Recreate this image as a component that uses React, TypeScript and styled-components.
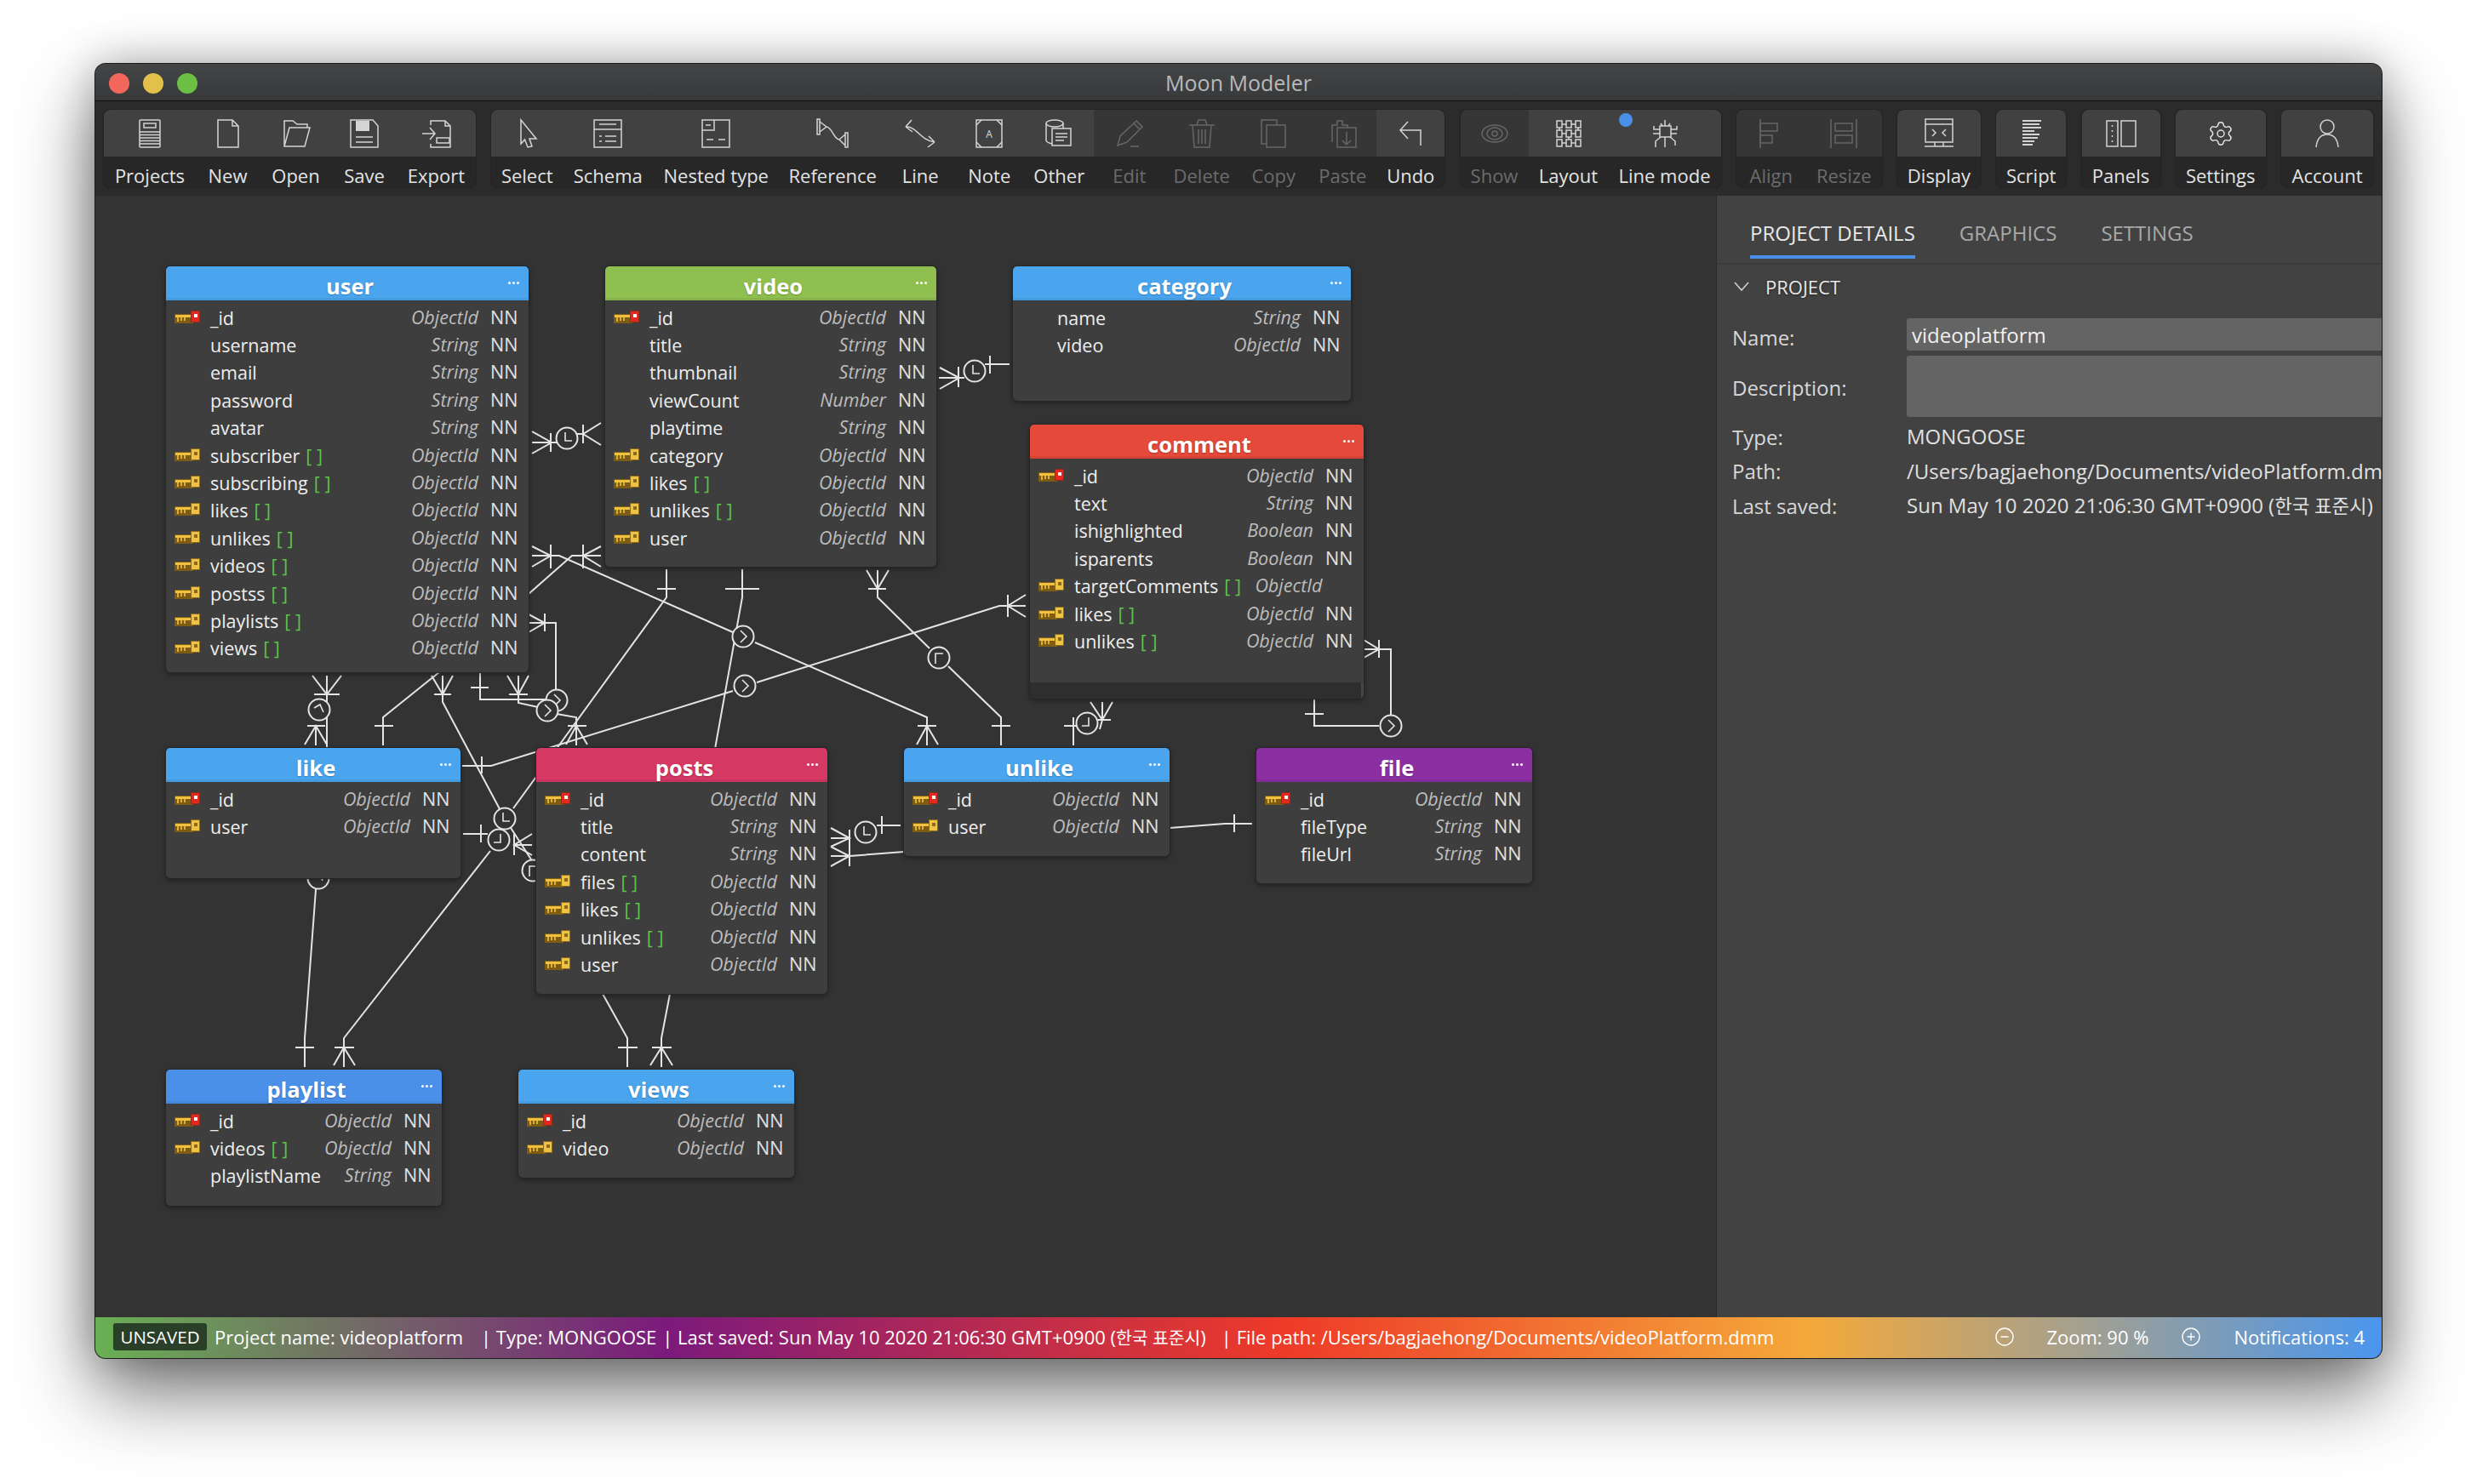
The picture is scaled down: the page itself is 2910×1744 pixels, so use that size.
import { ReactNode } from "react";
import styled, { createGlobalStyle } from "styled-components";
import { CircleMinus, CirclePlus, Settings } from "lucide-react";

// page position of the canvas, the diagram coordinates below are page pixels
const CANVAS_X = 112;
const CANVAS_Y = 230;

const GlobalStyle = createGlobalStyle`
  html, body {
    margin: 0;
    background: #fff;
    font-family: "Open Sans", "Noto Sans CJK KR", sans-serif;
  }
`;

const Page = styled.div`
  width: 2910px;
  height: 1744px;
  box-sizing: border-box;
  padding: 75px 112px 148px;
  overflow: hidden;
`;

const Window = styled.div`
  height: 100%;
  display: flex;
  flex-direction: column;
  border-radius: 12px;
  overflow: hidden;
  background: #333;
  box-shadow: 0 0 0 1px #1c1c1c, 0 40px 90px rgba(0, 0, 0, 0.55), 0 0 50px rgba(0, 0, 0, 0.25);
`;

const TitleBar = styled.div`
  flex: none;
  height: 44px;
  padding-top: 1px;
  box-sizing: border-box;
  position: relative;
  display: flex;
  align-items: center;
  justify-content: center;
  background: linear-gradient(#444547, #38393b);
  border-bottom: 1px solid #101010;
  color: #b9b9b9;
  font-size: 25px;
`;

const Lights = styled.div`
  position: absolute;
  left: 16px;
  top: 11px;
  display: flex;
  gap: 16px;
`;

const Light = styled.span<{ $color: string }>`
  width: 24px;
  height: 24px;
  border-radius: 50%;
  background: ${(p) => p.$color};
`;

const Toolbar = styled.div`
  flex: none;
  height: 111px;
  box-sizing: border-box;
  padding: 10px 10px 10px;
  display: flex;
  justify-content: space-between;
  background: #2b2b2b;
`;

const ToolGroup = styled.div`
  display: flex;
  border-radius: 8px;
  overflow: hidden;
  background: #272727;
  box-shadow: 0 0 2px rgba(0, 0, 0, 0.6);
`;

const ToolItem = styled.div<{ $off?: boolean; $w: number }>`
  position: relative;
  width: ${(p) => p.$w}px;
  display: flex;
  flex-direction: column;
  color: ${(p) => (p.$off ? "#6c6c6c" : "#e4e4e4")};
`;

const IconCell = styled.div<{ $off?: boolean }>`
  height: 55px;
  display: flex;
  align-items: center;
  justify-content: center;
  background: ${(p) => (p.$off ? "#363636" : "#414141")};
`;

const LabelCell = styled.div`
  height: 36px;
  box-sizing: border-box;
  padding-top: 8px;
  display: flex;
  align-items: center;
  justify-content: center;
  font-size: 22px;
  white-space: nowrap;
`;

const ToolSvg = styled.svg`
  width: 40px;
  height: 36px;
  fill: none;
  stroke: currentColor;
  stroke-width: 1.5;
  opacity: 0.9;
`;

const ModeDot = styled.span`
  position: absolute;
  left: 12px;
  top: 4px;
  width: 16px;
  height: 16px;
  border-radius: 50%;
  background: #4a90e8;
`;

const Main = styled.div`
  flex: 1;
  min-height: 0;
  display: flex;
`;

const Canvas = styled.div`
  flex: 1;
  position: relative;
  overflow: hidden;
  background: #333;
  box-shadow: inset -1px 0 0 #2b2b2b;
`;

const Wires = styled.svg`
  position: absolute;
  left: 0;
  top: 0;
  width: 100%;
  height: 100%;
  fill: none;
  stroke: #e4e4e4;
  stroke-width: 2;
`;

const Node = styled.div<{ $x: number; $y: number; $w: number; $h: number }>`
  position: absolute;
  left: ${(p) => p.$x - CANVAS_X}px;
  top: ${(p) => p.$y - CANVAS_Y}px;
  width: ${(p) => p.$w}px;
  height: ${(p) => p.$h}px;
  display: flex;
  flex-direction: column;
  border-radius: 5px;
  overflow: hidden;
  background: #3e3e3e;
  box-shadow: 0 0 0 1px #262626, 0 2px 6px rgba(0, 0, 0, 0.45);
`;

const NodeHead = styled.div<{ $color: string }>`
  flex: none;
  height: 40px;
  box-sizing: border-box;
  position: relative;
  display: flex;
  align-items: center;
  justify-content: center;
  padding: 5px 0 0 6px;
  background: ${(p) => p.$color};
  box-shadow: inset 0 -3px 0 rgba(0, 0, 0, 0.06);
  color: #fff;
  font-size: 25.5px;
  font-weight: 700;
  text-shadow: 0 1px 2px rgba(0, 0, 0, 0.25);
`;

const NodeMenu = styled.span`
  position: absolute;
  right: 11px;
  top: 18px;
  display: flex;
  gap: 2px;
  i {
    width: 3px;
    height: 3px;
    border-radius: 50%;
    background: #fff;
  }
`;

const NodeRows = styled.div`
  flex: 1;
  padding-top: 3px;
`;

const Row = styled.div`
  height: 32.4px;
  display: flex;
  align-items: center;
  padding: 0 12.5px 0 10px;
  font-size: 21.5px;
  color: #eee;
`;

const KeySlot = styled.span`
  flex: none;
  display: block;
  width: 30px;
  height: 15px;
  margin-right: 12px;
  svg {
    display: block;
  }
`;

const FieldName = styled.span`
  flex: 1;
  white-space: nowrap;
  padding-top: 2px;
`;

const ListMark = styled.span`
  margin-left: 7px;
  color: #5cc24a;
`;

const FieldType = styled.span<{ $bare?: boolean }>`
  flex: none;
  font-style: italic;
  color: #bdbdbd;
  margin-right: ${(p) => (p.$bare ? "36px" : "0")};
`;

const FieldNN = styled.span`
  flex: none;
  width: 46.5px;
  text-align: right;
  color: #e2e2e2;
`;

const ScrollStrip = styled.div`
  flex: none;
  height: 19px;
  background: #2e2e2e;
  border-right: 3px solid #464646;
`;

const Panel = styled.div`
  flex: none;
  width: 781px;
  background: #424242;
  color: #dcdcdc;
  font-size: 24px;
  overflow: hidden;
`;

const Tabs = styled.div`
  height: 81px;
  box-sizing: border-box;
  padding-left: 39px;
  display: flex;
  gap: 52px;
  border-bottom: 2px solid #3a3a3a;
`;

const Tab = styled.div<{ $active?: boolean }>`
  height: 74px;
  box-sizing: border-box;
  padding-top: 27px;
  color: ${(p) => (p.$active ? "#e8e8e8" : "#a9a9a9")};
  border-bottom: 4px solid ${(p) => (p.$active ? "#4a90e8" : "transparent")};
`;

const SectionHead = styled.div`
  height: 52px;
  padding-left: 20px;
  display: flex;
  align-items: center;
  gap: 19px;
  font-size: 22px;
  color: #e8e8e8;
  text-shadow: 0 1px 3px rgba(0, 0, 0, 0.5);
`;

const Chevron = styled.svg`
  width: 18px;
  height: 12px;
  fill: none;
  stroke: #cfcfcf;
  stroke-width: 1.6;
`;

const Fields = styled.div`
  padding: 11px 0 0 18px;
  display: grid;
  grid-template-columns: 205px 1fr;
  align-items: center;
  white-space: nowrap;
`;

const FieldLabel = styled.div`
  color: #d8d8d8;
`;

const TextBox = styled.div<{ $h: number; $gap: number }>`
  height: ${(p) => p.$h}px;
  margin-bottom: ${(p) => p.$gap}px;
  padding-left: 6px;
  display: flex;
  align-items: center;
  border-radius: 3px 0 0 3px;
  background: #646464;
  color: #f0f0f0;
`;

const FieldValue = styled.div`
  height: 40.5px;
  line-height: 40.5px;
  color: #e0e0e0;
`;

const Hangul = styled.span`
  font-size: 0.93em;
`;

const StatusBar = styled.div`
  flex: none;
  height: 48px;
  box-sizing: border-box;
  padding: 0 20px 2px 21px;
  display: flex;
  align-items: center;
  background: linear-gradient(90deg, #69b053, #7c1a7c 25%, #ee3a28 52%, #f4a93a 75%, #4a96ee);
  color: #fff;
  font-size: 22px;
  white-space: nowrap;
`;

const SavedBadge = styled.span`
  height: 32px;
  width: 110px;
  display: flex;
  align-items: center;
  justify-content: center;
  border-radius: 3px;
  background: #2a3f27;
  font-size: 20.5px;
  margin-right: 9px;
`;

const StatusText = styled.span<{ $gap: number }>`
  margin-right: ${(p) => p.$gap}px;
`;

const StatusSpring = styled.span`
  flex: 1;
`;

const ZoomButton = styled.span`
  display: flex;
  color: #fff;
`;

const ZoomText = styled.span`
  margin: 0 38px 0 37px;
`;

const Notices = styled.span`
  margin-left: 38px;
`;

type Field = { name: string; type: string; pk?: boolean; fk?: boolean; list?: boolean; bare?: boolean };
type Table = { title: string; color: string; x: number; y: number; w: number; h: number; fields: Field[]; strip?: boolean };

const BLUE = "#4aa5ee";
const pk: Field = { name: "_id", type: "ObjectId", pk: true };
const ref = (name: string): Field => ({ name, type: "ObjectId", fk: true, list: true });
const one = (name: string): Field => ({ name, type: "ObjectId", fk: true });
const str = (name: string): Field => ({ name, type: "String" });

const tables: Table[] = [
  {
    title: "user", color: BLUE, x: 195, y: 313, w: 426, h: 477,
    fields: [pk, str("username"), str("email"), str("password"), str("avatar"), ref("subscriber"), ref("subscribing"), ref("likes"), ref("unlikes"), ref("videos"), ref("postss"), ref("playlists"), ref("views")],
  },
  {
    title: "video", color: "#8fbf4f", x: 711, y: 313, w: 389, h: 353,
    fields: [pk, str("title"), str("thumbnail"), { name: "viewCount", type: "Number" }, str("playtime"), one("category"), ref("likes"), ref("unlikes"), one("user")],
  },
  {
    title: "category", color: BLUE, x: 1190, y: 313, w: 397, h: 158,
    fields: [str("name"), { name: "video", type: "ObjectId" }],
  },
  {
    title: "comment", color: "#e4493a", x: 1210, y: 499, w: 392, h: 322, strip: true,
    fields: [
      pk, str("text"), { name: "ishighlighted", type: "Boolean" }, { name: "isparents", type: "Boolean" },
      { name: "targetComments", type: "ObjectId", fk: true, list: true, bare: true }, ref("likes"), ref("unlikes"),
    ],
  },
  { title: "like", color: BLUE, x: 195, y: 879, w: 346, h: 153, fields: [pk, one("user")] },
  {
    title: "posts", color: "#d63864", x: 630, y: 879, w: 342, h: 289,
    fields: [pk, str("title"), str("content"), ref("files"), ref("likes"), ref("unlikes"), one("user")],
  },
  { title: "unlike", color: BLUE, x: 1062, y: 879, w: 312, h: 127, fields: [pk, one("user")] },
  { title: "file", color: "#8c2fa3", x: 1476, y: 879, w: 324, h: 159, fields: [pk, str("fileType"), str("fileUrl")] },
  { title: "playlist", color: "#4a90e8", x: 195, y: 1257, w: 324, h: 160, fields: [pk, ref("videos"), str("playlistName")] },
  { title: "views", color: BLUE, x: 609, y: 1257, w: 324, h: 127, fields: [pk, one("video")] },
];

// relation lines, a bar is the "one" mark and the three-way ends the "many" mark
const wires = [
  // user <> like
  "M367 794L384 816L401 794M369 816H399M384 794V816L384 879",
  "M361 853H382M371 853V876M358 875L371 853L384 875",
  "M516 790L450 843V876M440 853H462",
  // user <> unlike / posts
  "M507 794L520 816L532 794M510 816H530M520 794V825L593 962L624 1010",
  "M553 808H574M564 790V822H641",
  "M653 811V732H621M621 722L640 732L621 743M640 721V742",
  "M596 794L609 816L621 794M598 816H620M609 794V826L632 831M654 839L677 843V876M667 853H689M665 875L677 853L690 875",
  // video <> posts
  "M783 669V702L603 950M772 692H794",
  "M872 669V702L840 880M852 692H892",
  // like <> comment
  "M543 900H577L861 812M889 802L1174 712H1205M1205 699L1184 712L1205 725M1184 699V725M566 889V909",
  // user <> unlike
  "M625 642L647 653L625 666M647 640V668M625 653H657L861 743M887 755L1089 843V876M1078 853H1100M1077 875L1089 853L1102 875",
  "M706 642L685 653L706 666M685 640V668M706 653H672L621 698",
  // user <> video
  "M625 507L648 520L625 533M647 509V531M625 520H654M685 499V521M706 497L685 510L706 523M685 510H678",
  // video <> category
  "M1104 432L1127 444L1104 457M1126 431V455M1103 444H1133M1163 418V439M1157 428H1186",
  // like / posts
  "M604 980V1005M625 980L604 993L625 1005M604 993H625",
  "M565 969V990M544 980H573",
  // posts <> unlike
  "M976 973L998 985L976 995M998 975V1000M976 985H998M976 995L998 1006L976 1018M998 995V1018M976 1006H998L1062 1001",
  "M1036 959V980M1030 970H1058",
  // unlike <> file
  "M1374 973L1439 968H1471M1450 957V978",
  // comment <> unlike
  "M1281 825L1295 846L1307 825M1285 846H1305M1295 825V846L1292 857M1250 853H1265M1261 843V876",
  // comment <> file
  "M1602 752L1620 763L1602 773M1620 752V773M1602 763H1634V840M1620 853H1544V821M1533 839H1555",
  // video <> unlike
  "M1018 670L1031 692L1044 670M1020 692H1041M1031 670V702L1092 762M1114 783L1176 843V876M1165 853H1187",
  // playlist
  "M372 1032L358 1220V1254M347 1231H369",
  "M576 1000L404 1220V1254M393 1231H416M392 1252L404 1231L417 1252",
  // views
  "M708 1168L737 1220V1254M726 1231H749",
  "M787 1168L777 1220V1254M766 1231H789M764 1252L777 1231L790 1252",
];

const CLOCK_L = "M-2 -7V3H6";
const CLOCK_J = "M2 -7V3H-6";
const CLOCK_G = "M-4 7V-5H5";
const CLOCK_R = "M-3 -7L4 0L-3 7";
const CLOCK_7 = "M-6 -2L1 -6L5 3";

const joints = [
  { x: 666, y: 515, g: CLOCK_L },
  { x: 1145, y: 436, g: CLOCK_L },
  { x: 375, y: 834, g: CLOCK_7 },
  { x: 654, y: 823, g: CLOCK_R },
  { x: 643, y: 835, g: CLOCK_R },
  { x: 875, y: 806, g: CLOCK_R },
  { x: 873, y: 748, g: CLOCK_R },
  { x: 593, y: 962, g: CLOCK_L },
  { x: 586, y: 987, g: CLOCK_J },
  { x: 626, y: 1023, g: CLOCK_G },
  { x: 374, y: 1032, g: CLOCK_7 },
  { x: 1017, y: 978, g: CLOCK_L },
  { x: 1277, y: 850, g: CLOCK_J },
  { x: 1103, y: 773, g: CLOCK_G },
  { x: 1634, y: 853, g: CLOCK_R },
];

const KeyIcon = ({ primary }: { primary?: boolean }) => (
  <svg width="30" height="15" viewBox="0 0 30 15">
    <rect x="0" y="4" width="22" height="11" fill="#7d5c14" />
    <rect x="1" y="5" width="20" height="3" fill="#f0c040" />
    <rect x="3" y="8" width="2" height="5" fill="#e0ad34" />
    <rect x="7" y="8" width="2" height="4" fill="#e0ad34" />
    <rect x="11" y="8" width="2" height="4" fill="#e0ad34" />
    <rect x="19" y="0" width="11" height="14" fill={primary ? "#8f2a1c" : "#8a6a1e"} />
    <rect x="20" y="1" width="9" height="12" fill={primary ? "#e3281e" : "#eec244"} />
    <rect x="23" y="4" width="4" height="4" fill={primary ? "#fff" : "#8a6a1e"} />
  </svg>
);

const Glyph = ({ children }: { children: ReactNode }) => <ToolSvg viewBox="0 0 40 36">{children}</ToolSvg>;

const icons: Record<string, ReactNode> = {
  projects: (
    <Glyph>
      <rect x="8" y="2" width="24" height="32" rx="1" />
      <rect x="13" y="6" width="14" height="5" />
      <path d="M8 16H32M8 19.5H32M8 23H32M8 26.5H32M8 30H32" />
    </Glyph>
  ),
  new: <Glyph><path d="M8 2H25L32 9V34H8ZM25 2V9H32" /></Glyph>,
  open: <Glyph><path d="M6 33V3H16L21 7H33V11M6 33H30L36 11H12Z" /></Glyph>,
  save: (
    <Glyph>
      <path d="M4 2H30L36 9V34H4Z" />
      <rect x="10" y="3" width="16" height="12" fill="currentColor" stroke="none" />
      <path d="M10 22H30M10 28H30" />
    </Glyph>
  ),
  export: (
    <Glyph>
      <path d="M13 8V3H30L36 9V34H13V30M30 3V9H36" />
      <path d="M3 18H18M12 11L18 18L12 25" />
      <rect x="20" y="23" width="15" height="6" />
    </Glyph>
  ),
  select: <Glyph><path d="M13 2L31 24H23L26 33L21 34L17.5 25L13 30Z" /></Glyph>,
  schema: (
    <Glyph>
      <rect x="4" y="2" width="32" height="32" />
      <path d="M10 7H30M4 13H36M10 21H13M17 21H30M10 27H13M17 27H30" />
    </Glyph>
  ),
  nested: (
    <Glyph>
      <rect x="4" y="2" width="32" height="32" />
      <path d="M4 14H18V2M8 8H14M9 25H17M23 25H31" />
    </Glyph>
  ),
  reference: (
    <Glyph>
      <path d="M2 1H5V19H2ZM5 4L13 10L5 16M13 10C20 11 22 26 29 25M38 17H35V34H38ZM35 19L28 25L35 32" />
    </Glyph>
  ),
  line: <Glyph><path d="M3 10L10 2M3 10L11 16M3 10C16 9 20 26 37 28M37 28L30 21M37 28L29 34" /></Glyph>,
  note: (
    <Glyph>
      <rect x="5" y="2" width="30" height="32" />
      <path d="M5 8L11 2M29 2L35 8M35 28L29 34M11 34L5 28" />
      <text x="20" y="23" fontSize="12" textAnchor="middle" fill="currentColor" stroke="none" fontFamily="Open Sans">A</text>
    </Glyph>
  ),
  other: (
    <Glyph>
      <ellipse cx="15" cy="6" rx="10" ry="4" />
      <path d="M5 6V26C5 28 8 29 12 30M25 6V12" />
      <rect x="12" y="12" width="22" height="20" />
      <path d="M16 18H30M16 22H30M16 26H26" />
    </Glyph>
  ),
  edit: <Glyph><path d="M6 32L9 21L28 3L35 10L17 28ZM25 6L32 13M21 33H31" /></Glyph>,
  delete: <Glyph><path d="M5 8H35M14 8L16 2H24L26 8M9 8L11 34H29L31 8M16 13V30M20 13V30M24 13V30" /></Glyph>,
  copy: <Glyph><path d="M12 30H6V2H24V8" /><rect x="12" y="8" width="22" height="26" /></Glyph>,
  paste: <Glyph><path d="M8 28V8H14V3H20V8H26V11" /><rect x="14" y="11" width="22" height="23" /><path d="M25 16V31M20 26L25 31L30 26" /></Glyph>,
  undo: <Glyph><path d="M8 14H32V32M17 4L8 14L17 24" /></Glyph>,
  show: (
    <Glyph>
      <ellipse cx="20" cy="18" rx="15" ry="10" />
      <ellipse cx="20" cy="18" rx="9" ry="7" />
      <circle cx="20" cy="18" r="3" />
    </Glyph>
  ),
  layout: (
    <Glyph>
      {[3, 14, 25].map((y) => (
        <g key={y}>
          <rect x="6" y={y} width="6" height="8" />
          <rect x="17" y={y} width="6" height="8" />
          <rect x="28" y={y} width="6" height="8" />
          <path d={`M12 ${y + 4}H17M23 ${y + 4}H28`} />
        </g>
      ))}
      <path d="M9 11V14M20 22V25M31 11V14" />
    </Glyph>
  ),
  linemode: (
    <Glyph>
      <rect x="14" y="9" width="13" height="13" />
      <path d="M20 2V9M14 13H7V9M27 13H34V9M14 18H6M27 18H34M15 22L9 27V34M26 22L32 27V32M20 22V34M17 9L15 6M24 9L26 6" />
    </Glyph>
  ),
  align: (
    <Glyph>
      <path d="M7 1V35" />
      <rect x="7" y="6" width="20" height="9" />
      <rect x="7" y="20" width="14" height="9" />
    </Glyph>
  ),
  resize: (
    <Glyph>
      <path d="M5 1V35M35 1V35" />
      <rect x="10" y="6" width="20" height="9" />
      <rect x="10" y="20" width="20" height="9" />
    </Glyph>
  ),
  display: (
    <Glyph>
      <rect x="4" y="1" width="32" height="27" />
      <path d="M4 7H36M12 13L16 17L12 21M28 13L24 17L28 21M3 33H37M15 28V33M25 28V33" />
    </Glyph>
  ),
  script: <Glyph><path d="M10 3H32M10 7H30M10 11H32M10 15H24M10 19H30M10 23H28M10 27H24M10 31H22" strokeWidth="2" /></Glyph>,
  panels: (
    <Glyph>
      <rect x="3" y="3" width="13" height="30" />
      <rect x="20" y="3" width="17" height="30" />
      <path d="M9.5 8V10M9.5 14V16M9.5 20V22M9.5 26V28" />
    </Glyph>
  ),
  settings: <Settings size={32} strokeWidth={1.1} />,
  account: <Glyph><circle cx="20" cy="10" r="8" /><path d="M7 34C8 24 12 19 20 19C28 19 32 24 33 34" /></Glyph>,
};

type Tool = { icon: string; label: string; w: number; off?: boolean; dot?: boolean };

const toolbar: Tool[][] = [
  [
    { icon: "projects", label: "Projects", w: 108 },
    { icon: "new", label: "New", w: 75 },
    { icon: "open", label: "Open", w: 85 },
    { icon: "save", label: "Save", w: 76 },
    { icon: "export", label: "Export", w: 93 },
  ],
  [
    { icon: "select", label: "Select", w: 84 },
    { icon: "schema", label: "Schema", w: 106 },
    { icon: "nested", label: "Nested type", w: 148 },
    { icon: "reference", label: "Reference", w: 126 },
    { icon: "line", label: "Line", w: 80 },
    { icon: "note", label: "Note", w: 82 },
    { icon: "other", label: "Other", w: 82 },
    { icon: "edit", label: "Edit", w: 83, off: true },
    { icon: "delete", label: "Delete", w: 87, off: true },
    { icon: "copy", label: "Copy", w: 82, off: true },
    { icon: "paste", label: "Paste", w: 80, off: true },
    { icon: "undo", label: "Undo", w: 80 },
  ],
  [
    { icon: "show", label: "Show", w: 80, off: true },
    { icon: "layout", label: "Layout", w: 94 },
    { icon: "linemode", label: "Line mode", w: 132, dot: true },
  ],
  [
    { icon: "align", label: "Align", w: 82, off: true },
    { icon: "resize", label: "Resize", w: 89, off: true },
  ],
  [{ icon: "display", label: "Display", w: 98 }],
  [{ icon: "script", label: "Script", w: 82 }],
  [{ icon: "panels", label: "Panels", w: 92 }],
  [{ icon: "settings", label: "Settings", w: 106 }],
  [{ icon: "account", label: "Account", w: 108 }],
];

const App = () => (
  <Page>
    <GlobalStyle />
    <Window>
      <TitleBar>
        <Lights>
          <Light $color="#f2665c" />
          <Light $color="#e2c04a" />
          <Light $color="#6bbf45" />
        </Lights>
        Moon Modeler
      </TitleBar>
      <Toolbar>
        {toolbar.map((tools) => (
          <ToolGroup key={tools[0].label}>
            {tools.map((t) => (
              <ToolItem key={t.label} $off={t.off} $w={t.w}>
                <IconCell $off={t.off}>{icons[t.icon]}</IconCell>
                <LabelCell>{t.label}</LabelCell>
                {t.dot && <ModeDot />}
              </ToolItem>
            ))}
          </ToolGroup>
        ))}
      </Toolbar>
      <Main>
        <Canvas>
          <Wires>
            <g transform={`translate(${-CANVAS_X} ${-CANVAS_Y})`}>
              {wires.map((d) => (
                <path key={d} d={d} />
              ))}
              {joints.map((j) => (
                <g key={`${j.x}-${j.y}`} transform={`translate(${j.x} ${j.y})`}>
                  <circle r="12.5" fill="#333" />
                  <path d={j.g} strokeWidth="1.6" />
                </g>
              ))}
            </g>
          </Wires>
          {tables.map((t) => (
            <Node key={t.title} $x={t.x} $y={t.y} $w={t.w} $h={t.h}>
              <NodeHead $color={t.color}>
                {t.title}
                <NodeMenu>
                  <i />
                  <i />
                  <i />
                </NodeMenu>
              </NodeHead>
              <NodeRows>
                {t.fields.map((f) => (
                  <Row key={f.name}>
                    <KeySlot>{(f.pk || f.fk) && <KeyIcon primary={f.pk} />}</KeySlot>
                    <FieldName>
                      {f.name}
                      {f.list && <ListMark>[ ]</ListMark>}
                    </FieldName>
                    <FieldType $bare={f.bare}>{f.type}</FieldType>
                    {!f.bare && <FieldNN>NN</FieldNN>}
                  </Row>
                ))}
              </NodeRows>
              {t.strip && <ScrollStrip />}
            </Node>
          ))}
        </Canvas>
        <Panel>
          <Tabs>
            <Tab $active>PROJECT DETAILS</Tab>
            <Tab>GRAPHICS</Tab>
            <Tab>SETTINGS</Tab>
          </Tabs>
          <SectionHead>
            <Chevron viewBox="0 0 18 12">
              <path d="M1 1L9 10L17 1" />
            </Chevron>
            PROJECT
          </SectionHead>
          <Fields>
            <FieldLabel>Name:</FieldLabel>
            <TextBox $h={38} $gap={6}>videoplatform</TextBox>
            <FieldLabel>Description:</FieldLabel>
            <TextBox $h={72} $gap={3} />
            <FieldLabel>Type:</FieldLabel>
            <FieldValue>MONGOOSE</FieldValue>
            <FieldLabel>Path:</FieldLabel>
            <FieldValue>/Users/bagjaehong/Documents/videoPlatform.dmm</FieldValue>
            <FieldLabel>Last saved:</FieldLabel>
            <FieldValue>Sun May 10 2020 21:06:30 GMT+0900 (<Hangul>한국 표준시</Hangul>)</FieldValue>
          </Fields>
        </Panel>
      </Main>
      <StatusBar>
        <SavedBadge>UNSAVED</SavedBadge>
        <StatusText $gap={21}>Project name: videoplatform</StatusText>
        <StatusText $gap={7}>| Type: MONGOOSE</StatusText>
        <StatusText $gap={18}>| Last saved: Sun May 10 2020 21:06:30 GMT+0900 (<Hangul>한국 표준시</Hangul>)</StatusText>
        <StatusText $gap={0}>| File path: /Users/bagjaehong/Documents/videoPlatform.dmm</StatusText>
        <StatusSpring />
        <ZoomButton><CircleMinus size={24} strokeWidth={1.4} /></ZoomButton>
        <ZoomText>Zoom: 90 %</ZoomText>
        <ZoomButton><CirclePlus size={24} strokeWidth={1.4} /></ZoomButton>
        <Notices>Notifications: 4</Notices>
      </StatusBar>
    </Window>
  </Page>
);

export default App;
